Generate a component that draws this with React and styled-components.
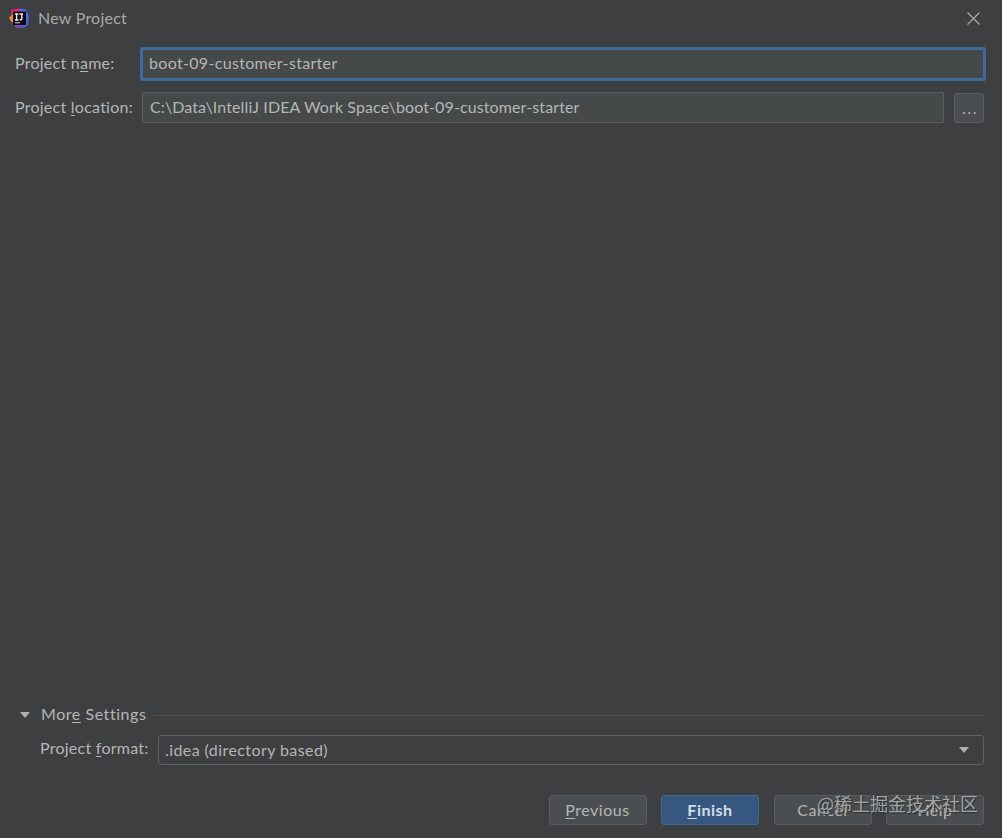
import styled, { createGlobalStyle } from "styled-components";

const GlobalStyle = createGlobalStyle`
  html, body {
    margin: 0;
    padding: 0;
    background: #3e3f41;
  }
`;

const Dialog = styled.div`
  position: relative;
  width: 1002px;
  height: 838px;
  overflow: hidden;
  display: flex;
  flex-direction: column;
  background: #3e3f41;
  color: #b4b6b6;
  font-family: "Lato", "Liberation Sans", sans-serif;
  font-size: 16px;
  letter-spacing: 0.25px;
`;

const TitleBar = styled.div`
  height: 36px;
  padding: 0 22px 0 9px;
  display: flex;
  align-items: center;
  gap: 9px;
  flex-shrink: 0;
`;

const Title = styled.div`
  flex: 1;
  padding-bottom: 2px;
  color: #a9abab;
  font-size: 16px;
`;

const Form = styled.div`
  padding: 11px 18px 0 15px;
  display: flex;
  flex-direction: column;
  gap: 11px;
`;

const Row = styled.div`
  display: flex;
  align-items: center;
`;

const Label = styled.label`
  width: ${(p) => p.$width}px;
  flex-shrink: 0;
  padding-bottom: ${(p) => p.$lift}px;
  white-space: nowrap;
`;

const Mnemonic = styled.span`
  text-decoration: underline;
  text-underline-offset: 2px;
`;

const Input = styled.div`
  flex: 1;
  box-sizing: border-box;
  height: ${(p) => (p.$focused ? 34 : 31)}px;
  margin: ${(p) => (p.$focused ? "0 -2px 0 -1px" : "0")};
  padding: ${(p) => (p.$focused ? "0 6px 4px 6px" : "0 7px 3px 7px")};
  display: flex;
  align-items: center;
  background: #45494a;
  color: #b4b6b6;
  letter-spacing: ${(p) => p.$tracking}px;
  white-space: nowrap;
  border: ${(p) => (p.$focused ? "3px solid #3f6a99" : "1px solid #5b5e5f")};
  border-radius: ${(p) => (p.$focused ? 2 : 1)}px;
`;

const BrowseButton = styled.button`
  width: 30px;
  height: 30px;
  margin-left: 10px;
  padding: 0 0 0 2px;
  background: #4a4e50;
  border: 1px solid #5a5d5f;
  border-radius: 3px;
  color: #b4b6b6;
  font: inherit;
  letter-spacing: 1.5px;
  line-height: 1;
`;

const Spacer = styled.div`
  flex: 1;
`;

const MoreSettings = styled.div`
  padding: 0 18px 0 20px;
  display: flex;
  flex-direction: column;
`;

const SectionHeader = styled.div`
  height: 20px;
  display: flex;
  align-items: center;
`;

const SectionTitle = styled.div`
  margin-left: 11px;
  padding-bottom: 3px;
  letter-spacing: 0.55px;
  white-space: nowrap;
`;

const Divider = styled.div`
  flex: 1;
  height: 1px;
  margin-left: 7px;
  background: #515456;
`;

const FormatRow = styled.div`
  margin-top: 10px;
  padding-left: 20px;
  display: flex;
  align-items: center;
`;

const Select = styled.div`
  flex: 1;
  box-sizing: border-box;
  height: 30px;
  padding: 0 14px 1px 6px;
  display: flex;
  align-items: center;
  justify-content: space-between;
  border: 1px solid #606364;
  border-radius: 3px;
  letter-spacing: 0.42px;
  white-space: nowrap;
`;

const Buttons = styled.div`
  margin-top: 30px;
  padding: 0 18px 13px 0;
  display: flex;
  justify-content: flex-end;
  gap: 14.5px;
`;

const Button = styled.button`
  width: 98px;
  height: 30px;
  padding: 0 0 1px;
  background: ${(p) => (p.$primary ? "#365880" : "#4a4e50")};
  border: 1px solid ${(p) => (p.$primary ? "#43688f" : "#5a5d5f")};
  border-radius: 3px;
  color: ${(p) => (p.$primary ? "#d5dde6" : "#b4b6b6")};
  font: inherit;
  font-weight: ${(p) => (p.$primary ? 700 : 400)};
  letter-spacing: 0.5px;
`;

const Watermark = styled.div`
  position: absolute;
  left: 817px;
  top: 790px;
  color: #a4a6a6;
  font-family: "Noto Sans CJK SC", sans-serif;
  font-size: 18px;
  letter-spacing: 0;
  white-space: nowrap;
  text-shadow: 1px 1px 1px #2b2d2e;
`;

const AppIcon = () => (
  <svg width="20" height="20" viewBox="0 0 20 20">
    <path d="M2 2 L11 0.5 L14 5 L3 11 Z" fill="#e8267c" />
    <path d="M11 0.5 L17 1.5 L20 8 L19 17 L14 20 L10 10 Z" fill="#4f63e8" />
    <path d="M0 9.5 L4 6 L5 16 L1.5 13 Z" fill="#f28a2e" />
    <path d="M2.5 14 L7 19.5 L14 20 L9 13 Z" fill="#8a3fd8" />
    <rect x="4" y="3.5" width="13" height="13.5" fill="#0d0d0f" />
    <rect x="6" y="14.3" width="5" height="1" fill="#d8d8d8" />
    <path d="M6 6 H9.4 M7.7 6 V12 M6 12 H9.4 M10.5 6 H14 M12.8 6 V10.6 Q12.8 12 10.6 12" stroke="#f2f2f2" strokeWidth="1.3" fill="none" />
  </svg>
);

const CloseIcon = () => (
  <svg width="13" height="13" viewBox="0 0 13 13">
    <path d="M0.5 0.5 L12.5 12.5 M12.5 0.5 L0.5 12.5" stroke="#a5a7a8" strokeWidth="1.2" fill="none" />
  </svg>
);

const Triangle = styled.div`
  width: 0;
  height: 0;
  flex-shrink: 0;
  border-left: ${(p) => p.$size}px solid transparent;
  border-right: ${(p) => p.$size}px solid transparent;
  border-top: ${(p) => p.$size + 1}px solid #aeb0b1;
`;

const SelectArrow = styled(Triangle)`
  margin-top: 1px;
`;

export default function App() {
  return (
    <Dialog>
      <GlobalStyle />
      <TitleBar>
        <AppIcon />
        <Title>New Project</Title>
        <CloseIcon />
      </TitleBar>
      <Form>
        <Row>
          <Label $width={126} $lift={4}>
            Project n<Mnemonic>a</Mnemonic>me:
          </Label>
          <Input $focused $tracking={0.32}>
            boot-09-customer-starter
          </Input>
        </Row>
        <Row>
          <Label $width={127} $lift={3}>
            Project <Mnemonic>l</Mnemonic>ocation:
          </Label>
          <Input $tracking={0.11}>C:\Data\IntelliJ IDEA Work Space\boot-09-customer-starter</Input>
          <BrowseButton>...</BrowseButton>
        </Row>
      </Form>
      <Spacer />
      <MoreSettings>
        <SectionHeader>
          <Triangle $size={5} />
          <SectionTitle>
            Mor<Mnemonic>e</Mnemonic> Settings
          </SectionTitle>
          <Divider />
        </SectionHeader>
        <FormatRow>
          <Label $width={118} $lift={5}>
            Project <Mnemonic>f</Mnemonic>ormat:
          </Label>
          <Select>
            .idea (directory based)
            <SelectArrow $size={5} />
          </Select>
        </FormatRow>
      </MoreSettings>
      <Buttons>
        <Button>
          <Mnemonic>P</Mnemonic>revious
        </Button>
        <Button $primary>
          <Mnemonic>F</Mnemonic>inish
        </Button>
        <Button>Cancel</Button>
        <Button>Help</Button>
      </Buttons>
      <Watermark>@稀土掘金技术社区</Watermark>
    </Dialog>
  );
}
